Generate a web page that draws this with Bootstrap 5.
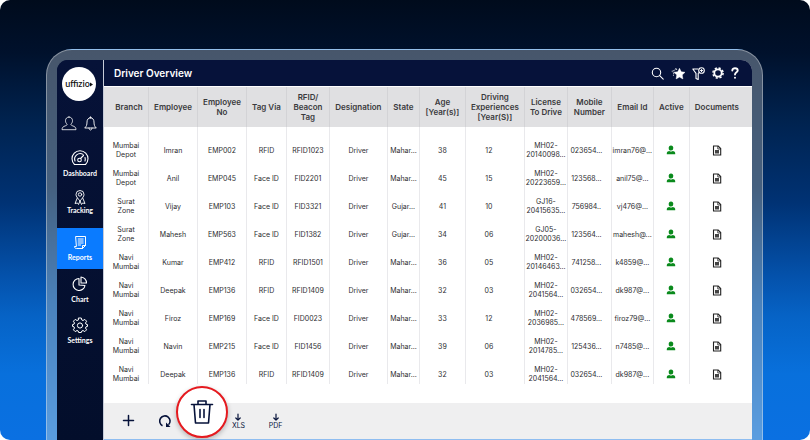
<!DOCTYPE html>
<html lang="en">
<head>
<meta charset="utf-8">
<meta name="viewport" content="width=device-width, initial-scale=1">
<title>Driver Overview</title>
<link href="https://cdn.jsdelivr.net/npm/bootstrap@5.3.0/dist/css/bootstrap.min.css" rel="stylesheet">
<style>
  :root { --navy: #06123a; }
  body { font-family: Inter, "Liberation Sans", sans-serif; background: #fff; }
  .backdrop { border-radius: 10px; background: linear-gradient(180deg, #000b1c 0%, #00112c 12%, #002350 28%, #003274 46%, #0452ac 63%, #0663c6 72%, #0870dc 85%, #0a70e2 100%); padding: 49px 47px 0 46px; }
  .bezel { border-radius: 26px 26px 0 0; padding: 10px 10px 0; border: 1px solid rgba(255,255,255,.35); border-bottom: 0; background: linear-gradient(180deg, #47566b 0%, #45607f 35%, #4a82bc 65%, #5a9de0 100%); }
  .screen { border-radius: 11px 11px 0 0; background: var(--navy); }
  .side { width: 47px; flex: none; border-right: 1px solid #c6cbd8; background: linear-gradient(180deg, #061238, #030e2b); }
  .side-top { padding: 7px 2px 0 0; }
  .brand-logo { width: 34px; height: 34px; color: #111; font: 600 9px/12px Lato, sans-serif; }
  .side-quick { margin-top: 15px; gap: 7px; }
  .side-nav { margin-top: 12px; }
  .side-nav a { height: 41px; color: #fff; font: 700 7px/9px Lato, sans-serif; gap: 3px; }
  .side-nav a.compact { height: 35px; margin: 1px 0 8px; gap: 1px; }
  .side-nav a.current { background: #0a7bff; }
  svg { display: block; flex: none; }
  svg.line { fill: none; stroke: currentColor; stroke-linecap: round; stroke-linejoin: round; }
  .plain-btn { border: 0; background: none; padding: 0; color: inherit; }
  .topbar { height: 26px; padding: 0 13px 0 10px; background: var(--navy); }
  .topbar h1 { font-size: 10px; line-height: 14px; font-weight: 600; }
  .topbar-tools { gap: 7px; }
  .sheet { padding-top: 1px; height: 298px; margin-bottom: 19px; overflow: hidden; }
  .drivers { table-layout: fixed; width: 100%; border-collapse: separate; border-spacing: 0; text-align: center; color: #2c2c2f; }
  .drivers th { height: 40px; background: #e0e0e2; font-size: 8px; line-height: 10px; font-weight: 600; padding: 0; vertical-align: middle; border-right: 1px solid #d3d3d6; color: #3a3a3d; }
  .drivers td { height: 28px; font-size: 7px; line-height: 9px; font-weight: 400; padding: 0; vertical-align: middle; border-right: 1px solid #e9e9ec; white-space: nowrap; }
  .drivers th:last-child, .drivers td:last-child { border-right: 0; padding-right: 8px; }
  .drivers th:first-child { padding-left: 6px; }
  .drivers td:nth-child(9) { padding-right: 12px; }
  .drivers td:nth-child(11) { padding-right: 6px; }
  .drivers .spacer-row td { height: 9px; }
  .drivers svg { margin: 0 auto; }
  .actions { height: 37px; background: #efeff0; color: var(--navy); border-bottom: 1px solid #8fbdf0; font-size: 7px; line-height: 8px; font-weight: 600; padding-left: 18px; }
  .slot { width: 37px; position: relative; }
  .slot:first-child { width: 13px; margin-right: 11px; }
  .bin { position: absolute; left: -7px; top: -35px; width: 52px; height: 52px; border: 2px solid #e51a1f; background: #fff; box-shadow: 0 2px 5px rgba(0,0,0,.25); }
</style>
</head>
<body>
<div class="backdrop min-vh-100 d-flex flex-column overflow-hidden">
  <div class="bezel flex-grow-1 d-flex">
    <div class="screen d-flex flex-grow-1 overflow-hidden">
      <nav class="side d-flex flex-column" aria-label="Main">
        <div class="side-top">
          <div class="brand-logo bg-white rounded-circle mx-auto d-flex align-items-center justify-content-center">uffizio<svg width="3" height="5" viewBox="0 0 3 5" fill="#111"><path d="M0 .5 3 2.500 0 4.500Z"/></svg></div>
          <div class="side-quick d-flex justify-content-center text-white">
            <button class="plain-btn" type="button" aria-label="Profile"><svg class="line" width="16" height="15" viewBox="0 0 16 15" stroke-width=".8"><path d="M8 1C5.900 1 4.500 2.600 4.500 4.700c0 1.500.7 2.700 1.600 3.500-.1 1-.7 1.300-1.900 1.700C2.200 10.500 1 11.500 1 13.700h14c0-2.200-1.200-3.200-3.200-3.800-1.200-.4-1.800-.7-1.900-1.700.9-.8 1.600-2 1.600-3.500C11.500 2.600 10.100 1 8 1Z"/></svg></button>
            <button class="plain-btn" type="button" aria-label="Notifications"><svg class="line" width="13" height="15" viewBox="0 0 13 15" stroke-width=".9"><path d="M6.500 1.800C4.300 1.800 3 3.500 3 6c0 3-.6 4.500-2.300 6h11.600C10.600 10.500 10 9 10 6c0-2.500-1.300-4.200-3.500-4.200ZM5 12c0 2.800 3 2.800 3 0M5.800 1.800c-.2-1.500 1.600-1.500 1.400 0"/></svg></button>
          </div>
        </div>
        <div class="side-nav d-flex flex-column">
          <a href="#" class="d-flex flex-column align-items-center justify-content-center text-decoration-none"><svg class="line" width="18" height="16" viewBox="0 0 18 16" stroke-width="1.100"><path d="M3.500 14.500A8 8 0 1 1 14.500 14.500ZM4 11A5.500 5.500 0 0 1 12 4.400M14 7.500A5.500 5.500 0 0 1 14 11M9.500 8.500 12.500 5.500"/><circle cx="8.500" cy="10" r="1.800"/></svg>Dashboard</a>
          <a href="#" class="compact d-flex flex-column align-items-center justify-content-center text-decoration-none"><svg class="line" width="14" height="15" viewBox="0 0 14 15" stroke-width=".9"><path d="M7 11C4.500 8 3 6.500 3 4.500a4 4 0 0 1 8 0C11 6.500 9.500 8 7 11ZM4.300 8 2 13.500l2.500-.5 1 1.500L7 11l1.500 3.500 1-1.500 2.500.5L9.700 8"/><circle cx="7" cy="4.500" r="1.700"/></svg>Tracking</a>
          <a href="#" aria-current="page" class="current d-flex flex-column align-items-center justify-content-center text-decoration-none"><svg class="line" width="14" height="15" viewBox="0 0 14 15" stroke-width="1"><path d="M3 1.500h9.500v9l-3 3H3.500C2 13.500 1.500 12.500 1.500 11.500H3ZM12.500 10.500h-3v3M5.200 4h5M5.200 6h5M5.200 8h5M5.200 10h2.500"/></svg>Reports</a>
          <a href="#" class="d-flex flex-column align-items-center justify-content-center text-decoration-none"><svg class="line" width="16" height="16" viewBox="0 0 16 16" stroke-width="1.100"><path d="M7 2.500A6 6 0 1 0 13 9.500L7 9ZM9 1v6h5.500A6 6 0 0 0 9 1Z"/></svg>Chart</a>
          <a href="#" class="d-flex flex-column align-items-center justify-content-center text-decoration-none"><svg class="line" width="16" height="16" viewBox="0 0 16 16" stroke-width="1"><path d="M6.700 1h2.600l.5 2 1.200.5 1.800-1.100 1.800 1.800L13.500 6l.5 1.200 1.500.4v1.800L14 9.800l-.5 1.200 1.100 1.800-1.800 1.800-1.800-1.100-1.200.5-.5 1.500H6.700l-.5-1.500L5 13.500l-1.800 1.100-1.800-1.800L2.500 11 2 9.800.5 9.400V7.600L2 7.200 2.500 6 1.400 4.200l1.800-1.800L5 3.500 6.200 3Z"/><circle cx="8" cy="8.500" r="2.600"/></svg>Settings</a>
        </div>
      </nav>
      <main class="flex-grow-1 d-flex flex-column bg-white">
        <header class="topbar d-flex align-items-center justify-content-between text-white">
          <h1 class="m-0">Driver Overview</h1>
          <div class="topbar-tools d-flex align-items-center">
            <button class="plain-btn" type="button" aria-label="Search"><svg class="line" width="13" height="13" viewBox="0 0 13 13" stroke-width="1.100"><circle cx="5.500" cy="5.500" r="4.200"/><path d="m8.700 8.700 3.500 3.500"/></svg></button>
            <button class="plain-btn" type="button" aria-label="Favourites"><svg width="14" height="13" viewBox="0 0 14 13" fill="currentColor"><path d="m8.500 1.300 1.700 3.500 3.800.5-2.800 2.700.7 3.900-3.400-1.800-3.400 1.800.7-3.900L3 5.300l3.800-.5Z" stroke="currentColor" stroke-width=".5"/><path d="M5.800 3 5 1 3.600 3.600.8 4l2 2-.4 2.800" fill="none" stroke="currentColor" stroke-width=".8" stroke-dasharray="1.200 .6"/></svg></button>
            <button class="plain-btn" type="button" aria-label="Filter"><svg class="line" width="13" height="13" viewBox="0 0 13 13" stroke-width="1.100"><path d="M6 2H.8L4 6.300V11.500l2.200 1V6.500l.9-1"/><circle cx="9.500" cy="3.500" r="2.800"/><path d="M9.500 2.500v2M8.500 3.500h2"/></svg></button>
            <button class="plain-btn" type="button" aria-label="Settings"><svg width="12" height="12" viewBox="0 0 12 12" fill="none" stroke="currentColor"><circle cx="6" cy="6" r="3.700" stroke-width="1.800"/><circle cx="6" cy="6" r="5.100" stroke-width="1.500" stroke-dasharray="2.200 1.805"/></svg></button>
            <button class="plain-btn" type="button" aria-label="Help"><svg class="line" width="8" height="12" viewBox="0 0 8 12" stroke-width="1.900"><path d="M1.300 3.500C1.300.5 6.700.5 6.700 3.500 6.700 5.300 4 5.200 4 7.500M4 10.600v.1"/></svg></button>
          </div>
        </header>
        <section class="sheet">
          <table class="drivers">
            <colgroup id="cols"></colgroup>
            <thead><tr>
              <th>Branch</th><th>Employee</th><th>Employee<br>No</th><th>Tag Via</th><th>RFID/<br>Beacon<br>Tag</th><th>Designation</th><th>State</th><th>Age<br>[Year(s)]</th><th>Driving<br>Experiences<br>[Year(S)]</th><th>License<br>To Drive</th><th>Mobile<br>Number</th><th>Email Id</th><th>Active</th><th>Documents</th>
            </tr></thead>
            <tbody id="rows"></tbody>
          </table>
        </section>
        <footer class="actions d-flex align-items-center">
          <div class="slot"><button class="plain-btn" type="button" aria-label="Add"><svg class="line" width="13" height="13" viewBox="0 0 13 13" stroke-width="1.500"><path d="M6.500 1.500v10M1.500 6.500h10"/></svg></button></div>
          <div class="slot d-flex justify-content-center"><button class="plain-btn" type="button" aria-label="Refresh"><svg width="14" height="14" viewBox="0 0 14 14"><path d="M4.500 11.700A5.200 5.200 0 1 1 10.500 10.800" fill="none" stroke="currentColor" stroke-width="1.600"/><path d="M8 8.500V13h4.500Z" fill="currentColor"/></svg></button></div>
          <div class="slot"><button class="plain-btn bin rounded-circle d-flex align-items-center justify-content-center" type="button" aria-label="Delete"><svg class="line" width="24" height="26" viewBox="0 0 24 26" stroke-width="1.600"><path d="M1.500 5.500h21M4 5.500 5.500 24h13L20 5.500M8 5V2h8v3M10 10.500v8M14 10.500v8"/></svg></button></div>
          <div class="slot d-flex justify-content-center"><button class="plain-btn d-flex flex-column align-items-center" type="button"><svg class="line" width="8" height="9" viewBox="0 0 8 9" stroke-width="1.200"><path d="M4 1v6M1.800 5 4 7.200 6.200 5"/></svg>XLS</button></div>
          <div class="slot d-flex justify-content-center"><button class="plain-btn d-flex flex-column align-items-center" type="button"><svg class="line" width="8" height="9" viewBox="0 0 8 9" stroke-width="1.200"><path d="M4 1v6M1.800 5 4 7.200 6.200 5"/></svg>PDF</button></div>
        </footer>
      </main>
    </div>
  </div>
</div>
<script src="https://cdn.jsdelivr.net/npm/bootstrap@5.3.0/dist/js/bootstrap.bundle.min.js"></script>
<script>
  const widths = [45, 49, 49, 40, 43, 58, 32, 46, 59, 43, 44, 42, 36, 62];
  document.getElementById('cols').innerHTML = widths.map(w => `<col style="width:${w / 6.48}%">`).join('');
  const person = '<svg width="10" height="10" viewBox="0 0 10 10" fill="#0a8a1c" role="img" aria-label="Active"><ellipse cx="5" cy="3" rx="2.300" ry="2.600"/><path d="M.8 9.200V8C.8 6.500 2.300 6 3.300 5.900c1 .9 2.400.9 3.400 0C7.700 6 9.200 6.500 9.200 8v1.200Z"/></svg>';
  const doc = '<svg width="10" height="11" viewBox="0 0 10 11" role="img" aria-label="Document"><path d="M1.500 1h4.700L8.700 3.500V10H1.500Z" fill="none" stroke="#222" stroke-width="1.100"/><path d="M3 5h4v3.500H3Z" fill="#444"/><path d="M5.800 1v3h3" fill="none" stroke="#222" stroke-width=".8"/></svg>';
  const data = [
    ['Mumbai Depot','Imran','EMP002','RFID','RFID1023','Mahar...','38','12','MH02- 20140098...','023654...','imran76@...'],
    ['Mumbai Depot','Anil','EMP045','Face ID','FID2201','Mahar...','45','15','MH02- 20223659...','123568...','anil75@...'],
    ['Surat Zone','Vijay','EMP103','Face ID','FID3321','Gujar...','41','10','GJ16- 20415635...','756984..','vj476@...'],
    ['Surat Zone','Mahesh','EMP563','Face ID','FID1382','Gujar...','34','06','GJ05- 20200036...','123564...','mahesh@...'],
    ['Navi Mumbai','Kumar','EMP412','RFID','RFID1501','Mahar...','36','05','MH02- 20146463...','741258...','k4859@...'],
    ['Navi Mumbai','Deepak','EMP136','RFID','RFID1409','Mahar...','32','03','MH02- 2041564...','032654...','dk987@...'],
    ['Navi Mumbai','Firoz','EMP169','Face ID','FID0023','Mahar...','33','12','MH02- 2036985...','478569...','firoz79@...'],
    ['Navi Mumbai','Navin','EMP215','Face ID','FID1456','Mahar...','39','06','MH02- 2014785...','125436...','n7485@...'],
    ['Navi Mumbai','Deepak','EMP136','RFID','RFID1409','Mahar...','32','03','MH02- 2041564...','032654...','dk987@...']
  ];
  const cell = html => `<td>${html}</td>`;
  document.getElementById('rows').innerHTML =
    '<tr class="spacer-row">' + cell('').repeat(14) + '</tr>' +
    data.map(r => {
      const c = r.slice();
      c[0] = c[0].replace(' ', '<br>');
      c[8] = c[8].replace(' ', '<br>');
      c.splice(5, 0, 'Driver');
      return '<tr>' + c.concat(person, doc).map(cell).join('') + '</tr>';
    }).join('');
</script>
</body>
</html>
